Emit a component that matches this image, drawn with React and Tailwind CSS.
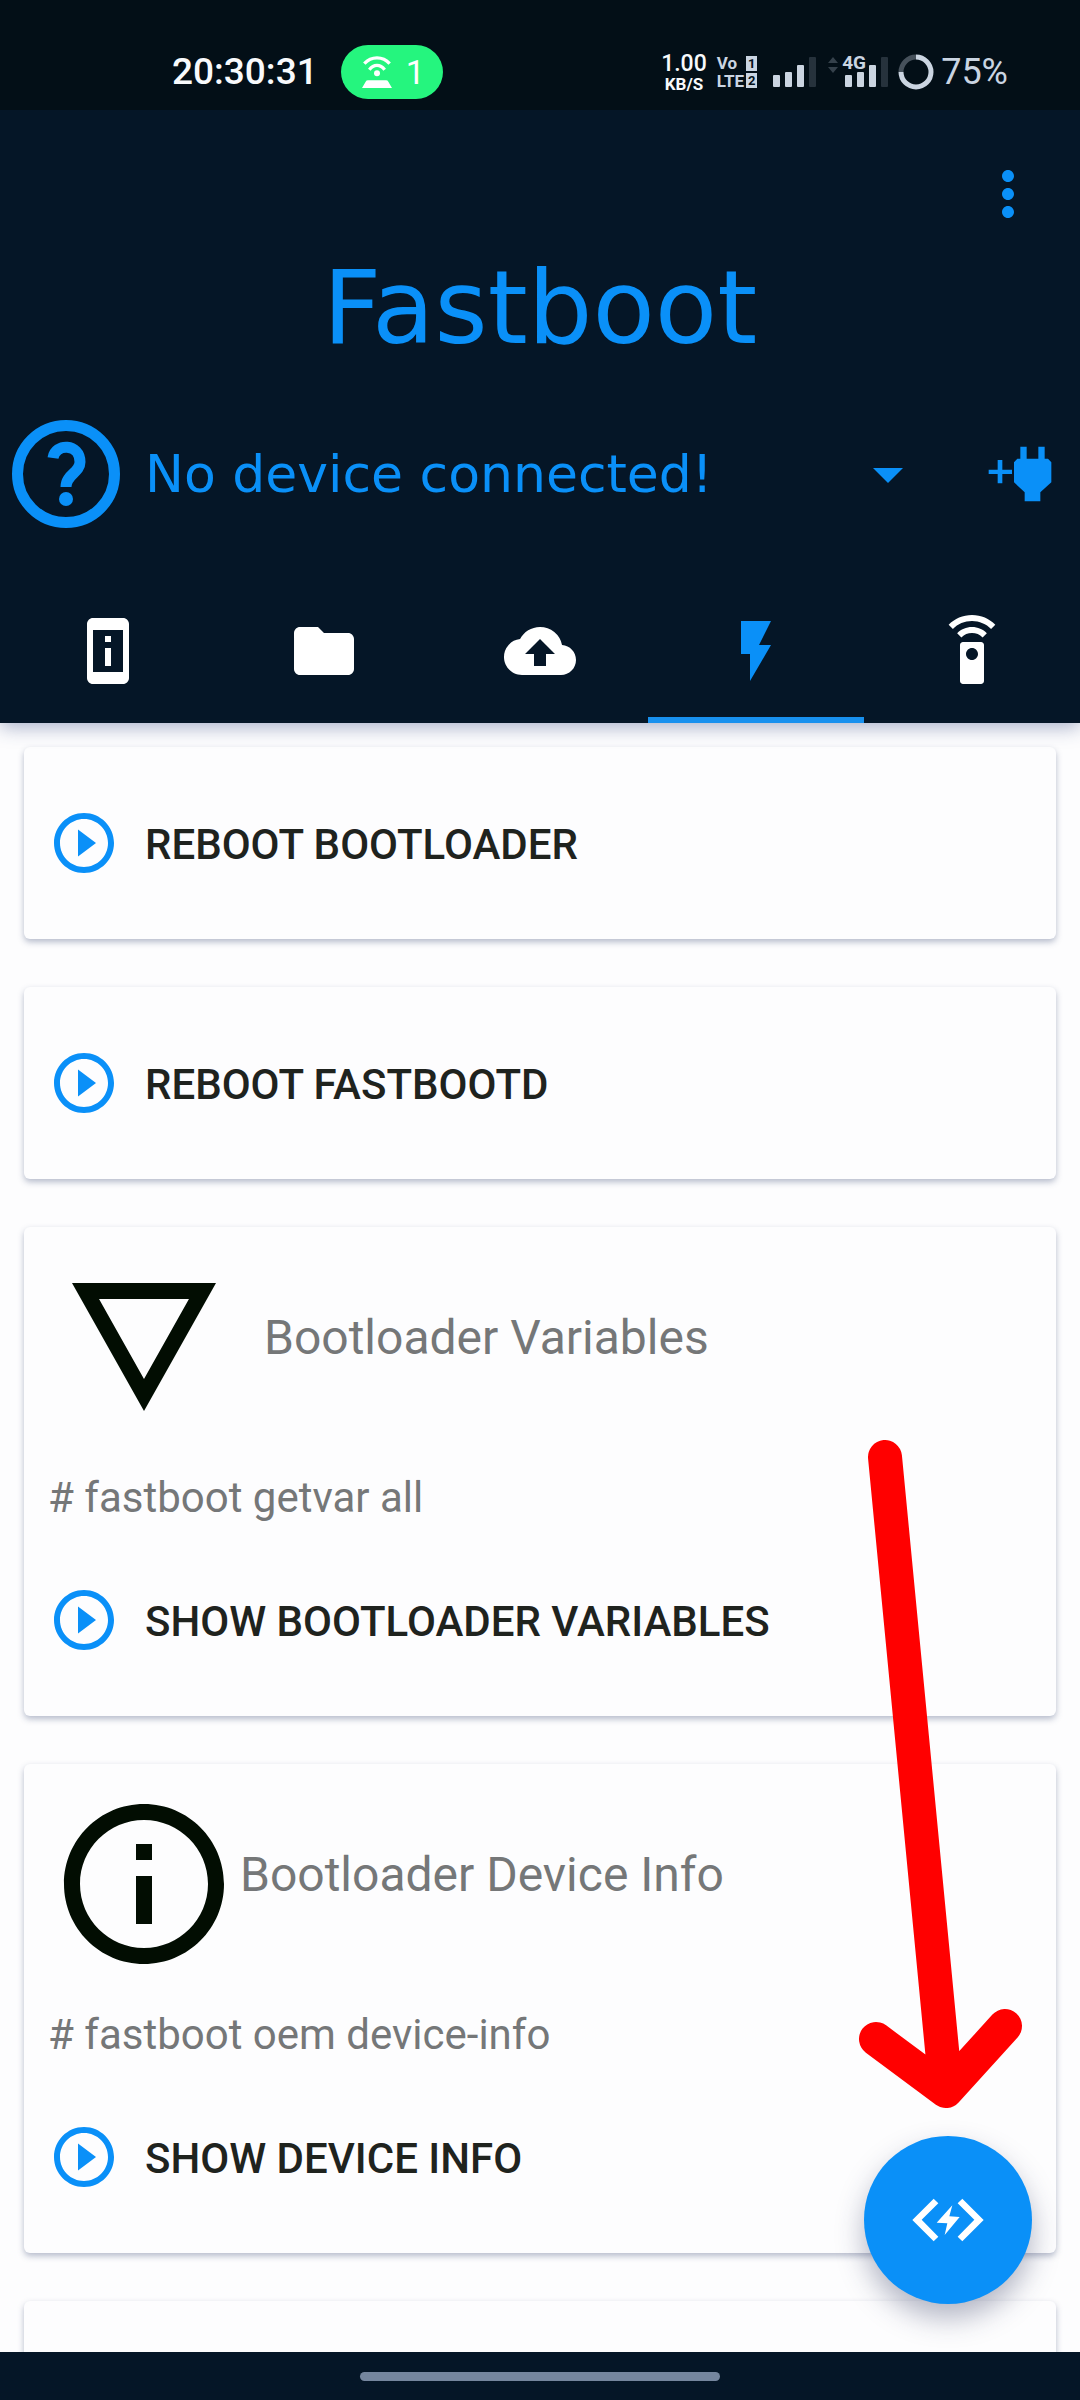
import { useState } from "react";
import {
  MdArrowDropDown,
  MdBackup,
  MdFlashOn,
  MdFolder,
  MdInfoOutline,
  MdMoreVert,
  MdPermDeviceInformation,
  MdPlayCircleOutline,
  MdSettingsRemote,
} from "react-icons/md";

function HotspotIcon() {
  return (
    <svg viewBox="0 0 90 96" className="h-8 w-[30px]" fill="none" stroke="white" strokeWidth="10" aria-hidden="true">
      <path d="M7 23C28 0 62 0 83 23" />
      <path d="M22 41C35 24 55 24 68 41" />
      <circle cx="45" cy="52" r="9" fill="white" stroke="none" />
      <path d="M18 73H72Q77 73 79 77L90 96H0L11 77Q13 73 18 73Z" fill="white" stroke="none" />
    </svg>
  );
}

function SignalBars() {
  return (
    <svg viewBox="0 0 43 30" className="h-[30px] w-[43px]" fill="#cbd5e1" aria-hidden="true">
      <rect x="0" y="18" width="7" height="12" rx="1" />
      <rect x="12" y="15" width="7" height="15" rx="1" />
      <rect x="24" y="8" width="7" height="22" rx="1" />
      <rect x="36" y="0" width="7" height="30" rx="1" fill="#26323c" />
    </svg>
  );
}

function BatteryRing() {
  return (
    <svg viewBox="0 0 36 36" className="size-9" fill="none" strokeWidth="5" aria-hidden="true">
      <path d="M3 18A15 15 0 0 1 18 3" stroke="#46515b" />
      <path d="M18 3A15 15 0 1 1 3 18" stroke="#cbd5e1" />
    </svg>
  );
}

function StatusBar() {
  return (
    <div className="relative z-20 flex h-[110px] shrink-0 items-center bg-[#030f17] pt-[34px] pr-[72px] pl-[172px] font-['Roboto',sans-serif]">
      <span className="text-[37px] leading-[44px] font-medium text-slate-50">20:30:31</span>
      <span className="ml-[23px] flex h-[54px] w-[102px] items-center gap-3.5 rounded-full bg-[#25f57e] pl-[21px] text-[34px] leading-[54px] text-white">
        <HotspotIcon />1
      </span>
      <div className="ml-auto flex items-center text-slate-300">
        <div className="flex flex-col items-center font-medium text-slate-50">
          <span className="text-[23px] leading-[24px]">1.00</span>
          <span className="text-[17px] leading-[17px] font-bold">KB/S</span>
        </div>
        <div className="ml-2.5 flex items-center gap-0.5 font-bold">
          <div className="flex flex-col text-[17px] leading-[18px]">
            <span>Vo</span>
            <span>LTE</span>
          </div>
          <div className="flex flex-col gap-0.5 text-center text-[13px] leading-[15px] text-[#030f17]">
            <span className="w-[11px] bg-slate-300">1</span>
            <span className="w-[11px] bg-slate-300">2</span>
          </div>
        </div>
        <div className="ml-4">
          <SignalBars />
        </div>
        <div className="relative ml-3 flex">
          <svg viewBox="0 0 10 16" className="mr-[7px] h-4 w-2.5" fill="#35414b" aria-hidden="true">
            <path d="M5 0L10 6H0ZM5 16L0 10H10Z" />
          </svg>
          <SignalBars />
          <span className="absolute -top-1 left-3.5 bg-[#030f17] text-[19px] leading-[19px] font-bold">
            4G
          </span>
        </div>
        <div className="mr-[7px] ml-2.5">
          <BatteryRing />
        </div>
        <span className="text-[36px] leading-[44px]">75%</span>
      </div>
    </div>
  );
}

function HelpIcon() {
  return (
    <svg viewBox="0 0 130 130" className="size-[130px] shrink-0" fill="none" stroke="currentColor" strokeWidth="11" aria-hidden="true">
      <circle cx="65" cy="65" r="48.5" />
      <path d="M52 49C54 34 79 34 79 53C79 64 65 65 65 78" />
      <circle cx="65" cy="90" r="7" fill="currentColor" stroke="none" />
    </svg>
  );
}

function PlugIcon() {
  return (
    <svg viewBox="0 0 192 168" className="h-14 w-16" fill="currentColor" aria-hidden="true">
      <path d="M29 42H43V71H72V84H43V112H29V84H2V71H29Z" />
      <path d="M97 2H116V38H151V2H170V38H180L190 49V109L157 139V166H110V139L78 109V49L88 38H97Z" />
    </svg>
  );
}

function DetailsIcon({ className }) {
  return (
    <svg viewBox="0 0 24 24" className={className} fill="currentColor" aria-hidden="true">
      <path d="M6.38 6H17.62L12 16ZM3 4L12 20L21 4Z" fillRule="evenodd" />
    </svg>
  );
}

const tabs = [
  { name: "Device", Icon: MdPermDeviceInformation },
  { name: "Files", Icon: MdFolder },
  { name: "Sideload", Icon: MdBackup },
  { name: "Fastboot", Icon: MdFlashOn },
  { name: "Remote", Icon: MdSettingsRemote },
];

function Header() {
  const [active, setActive] = useState("Fastboot");
  return (
    <header className="relative z-10 shrink-0 bg-[#051627] text-[#0a90f8] shadow-[0_4px_18px_rgba(40,60,120,0.4)]">
      <div className="flex h-[134px] items-end justify-end pr-9">
        <button aria-label="More options" className="mb-3.5">
          <MdMoreVert className="size-[72px]" />
        </button>
      </div>
      <h1 className="text-center font-['DejaVu_Sans',sans-serif] text-[102px] leading-[128px]">Fastboot</h1>
      <div className="flex h-[204px] items-center pr-7 pl-px">
        <HelpIcon />
        <div className="relative ml-3.5 flex flex-1 items-center">
          <select
            aria-label="Connected device"
            className="h-[72px] w-full appearance-none bg-transparent font-['DejaVu_Sans',sans-serif] text-[52px] leading-[72px] outline-none"
          >
            <option>No device connected!</option>
          </select>
          <MdArrowDropDown className="pointer-events-none absolute right-0 size-[72px]" />
        </div>
        <button aria-label="Add device" className="ml-16">
          <PlugIcon />
        </button>
      </div>
      <nav className="grid grid-cols-5 pt-[3px]">
        {tabs.map(({ name, Icon }) => (
          <button
            key={name}
            aria-label={name}
            onClick={() => setActive(name)}
            className={
              active === name
                ? "relative flex h-36 items-center justify-center text-[#0a90f8]"
                : "relative flex h-36 items-center justify-center text-white"
            }
          >
            <Icon className="size-[72px]" />
            {active === name && <span className="absolute inset-x-0 bottom-0 h-1.5 bg-[#1890ee]" />}
          </button>
        ))}
      </nav>
    </header>
  );
}

function Card({ children }) {
  return (
    <section className="rounded-md bg-[#fdfdfe] px-6 shadow-[0_3px_6px_rgba(50,65,110,0.35)]">{children}</section>
  );
}

function ActionButton({ children }) {
  return (
    <button className="flex items-center gap-[25px] text-[42px] font-medium text-[#1f231e]">
      <MdPlayCircleOutline className="size-[72px] text-[#0a90f8]" />
      <span className="pt-[3px] leading-[69px]">{children}</span>
    </button>
  );
}

function CommandCard({ icon, title, command, action }) {
  return (
    <Card>
      <div className="flex pt-6 text-[#757778]">
        <div className="flex text-[#020d02]">{icon}</div>
        <h2 className="pt-[59px] text-[48px] leading-[56px]">{title}</h2>
      </div>
      <p className="mt-[30px] text-[42px] leading-[50px] text-[#757778]">{command}</p>
      <div className="pt-[61px] pb-[60px]">
        <ActionButton>{action}</ActionButton>
      </div>
    </Card>
  );
}

export default function App() {
  return (
    <div className="flex h-screen flex-col overflow-hidden bg-[#fdfdfe] font-['Roboto',sans-serif]">
      <StatusBar />
      <Header />
      <main className="relative min-h-0 flex-1 overflow-hidden">
        <div className="flex flex-col gap-12 px-6 pt-6">
          <Card>
            <div className="py-[60px]">
              <ActionButton>REBOOT BOOTLOADER</ActionButton>
            </div>
          </Card>
          <Card>
            <div className="py-[60px]">
              <ActionButton>REBOOT FASTBOOTD</ActionButton>
            </div>
          </Card>
          <CommandCard
            icon={<DetailsIcon className="mr-6 size-48" />}
            title="Bootloader Variables"
            command="# fastboot getvar all"
            action="SHOW BOOTLOADER VARIABLES"
          />
          <CommandCard
            icon={<MdInfoOutline className="size-48" />}
            title="Bootloader Device Info"
            command="# fastboot oem device-info"
            action="SHOW DEVICE INFO"
          />
          <Card>
            <div className="h-48" />
          </Card>
        </div>
        <button
          aria-label="Run fastboot command"
          className="absolute right-12 bottom-12 size-[168px] rounded-full bg-[#0a90f8] shadow-[0_14px_28px_rgba(40,50,90,0.35)]"
        >
          <svg viewBox="0 0 504 504" className="size-full" fill="white" aria-hidden="true">
            <path d="M209 188L223 202L173 251L223 302L209 316L145 252Z" />
            <path d="M295 188L281 202L331 251L281 302L295 316L359 252Z" />
            <path d="M265 208L256 241L287 243L242 297L250 262L218 260Z" />
          </svg>
        </button>
        <svg
          viewBox="0 0 164 668"
          className="pointer-events-none absolute right-[57px] bottom-[244px] h-[668px] w-[164px]"
          fill="none"
          stroke="#ff0000"
          strokeWidth="34"
          strokeLinecap="round"
          strokeLinejoin="round"
          aria-hidden="true"
        >
          <path d="M26 17L87 651M17 599L87 651L146 586" />
        </svg>
      </main>
      <footer className="flex h-12 shrink-0 items-center justify-center bg-[#051627]">
        <div className="h-[9px] w-1/3 rounded-full bg-[#75869e]" />
      </footer>
    </div>
  );
}
